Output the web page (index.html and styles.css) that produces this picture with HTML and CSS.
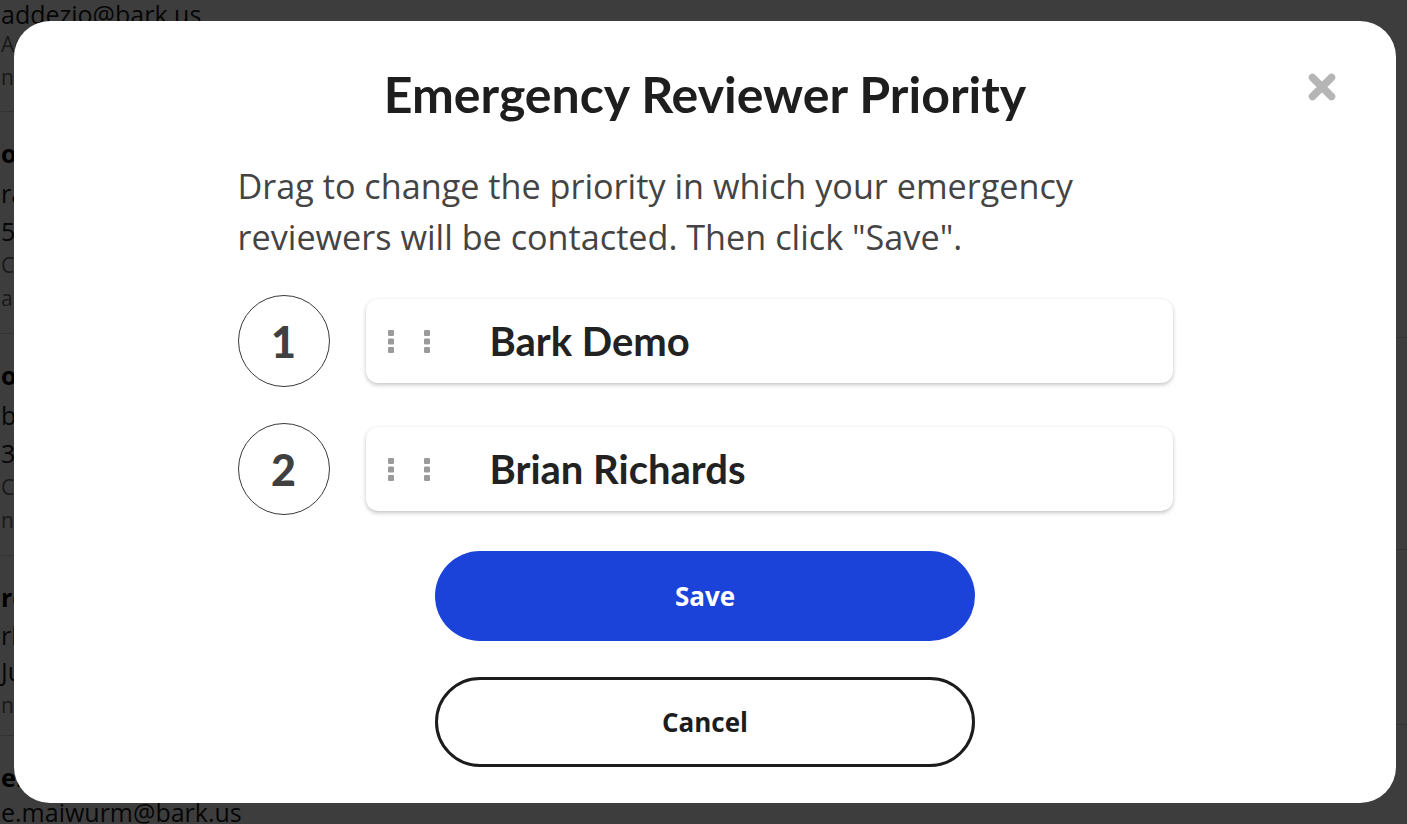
FILE: index.html
```html
<!DOCTYPE html>
<html lang="en">
<head>
<meta charset="utf-8">
<title>Emergency Reviewer Priority</title>
<link rel="stylesheet" href="styles.css">
</head>
<body>
<div class="page">
  <div class="list">
    <div class="person person-a">
      <div class="l-email">addezio@bark.us</div>
      <div class="l-meta">Added Jan 12</div>
      <div class="l-meta">no alerts</div>
    </div>
    <div class="person">
      <div class="l-name">olivia Park</div>
      <div class="l-text">rachel@bark.us</div>
      <div class="l-text l-short">555-201-4432</div>
      <div class="l-meta">Contact</div>
      <div class="l-meta">arrived Mar 2</div>
    </div>
    <div class="person">
      <div class="l-name">owen Hale</div>
      <div class="l-text">bhale@bark.us</div>
      <div class="l-text l-short">312-555-0187</div>
      <div class="l-meta">Contact</div>
      <div class="l-meta">no alerts</div>
    </div>
    <div class="person person-d">
      <div class="l-name">rosa Lin</div>
      <div class="l-text l-short">rlin@bark.us</div>
      <div class="l-text l-short">June 4</div>
      <div class="l-meta">no alerts</div>
    </div>
    <div class="person person-e">
      <div class="l-name">emma Maiwurm</div>
      <div class="l-email">e.maiwurm@bark.us</div>
    </div>
  </div>
  <div class="side">
    <div class="side-block side-1"></div>
    <div class="side-block side-2"></div>
    <div class="side-block side-3"></div>
  </div>
</div>

<div class="overlay">
  <div class="modal" role="dialog" aria-labelledby="modal-title">
    <button class="close" aria-label="Close">
      <svg width="28" height="28" viewBox="0 0 28 28" aria-hidden="true">
        <path d="M4.5 4.5 L23.5 23.5 M23.5 4.5 L4.5 23.5" stroke="#b5b5b5" stroke-width="7.5" stroke-linecap="round" fill="none"/>
      </svg>
    </button>
    <h1 class="title" id="modal-title">Emergency Reviewer Priority</h1>
    <p class="desc">Drag to change the priority in which your emergency reviewers will be contacted. Then click "Save".</p>
    <ol class="reviewers">
      <li class="reviewer">
        <span class="rank">1</span>
        <div class="card">
          <span class="handle"><svg width="6" height="23" viewBox="0 0 6 23"><rect x="0" y="0" width="6" height="6" rx="1.2"/><rect x="0" y="8.5" width="6" height="6" rx="1.2"/><rect x="0" y="17" width="6" height="6" rx="1.2"/></svg></span>
          <span class="handle"><svg width="6" height="23" viewBox="0 0 6 23"><rect x="0" y="0" width="6" height="6" rx="1.2"/><rect x="0" y="8.5" width="6" height="6" rx="1.2"/><rect x="0" y="17" width="6" height="6" rx="1.2"/></svg></span>
          <span class="name">Bark Demo</span>
        </div>
      </li>
      <li class="reviewer">
        <span class="rank">2</span>
        <div class="card">
          <span class="handle"><svg width="6" height="23" viewBox="0 0 6 23"><rect x="0" y="0" width="6" height="6" rx="1.2"/><rect x="0" y="8.5" width="6" height="6" rx="1.2"/><rect x="0" y="17" width="6" height="6" rx="1.2"/></svg></span>
          <span class="handle"><svg width="6" height="23" viewBox="0 0 6 23"><rect x="0" y="0" width="6" height="6" rx="1.2"/><rect x="0" y="8.5" width="6" height="6" rx="1.2"/><rect x="0" y="17" width="6" height="6" rx="1.2"/></svg></span>
          <span class="name">Brian Richards</span>
        </div>
      </li>
    </ol>
    <div class="actions">
      <button class="btn btn-primary">Save</button>
      <button class="btn btn-secondary">Cancel</button>
    </div>
  </div>
</div>
</body>
</html>
```

FILE: styles.css
```css
* { box-sizing: border-box; }

html, body {
  margin: 0;
  padding: 0;
  height: 100%;
  overflow: hidden;
}

body {
  background: #ffffff;
  font-family: "Open Sans", "Noto Sans", sans-serif;
}

/* underlying page */
.page {
  display: grid;
  grid-template-columns: 1fr 120px;
  height: 100%;
}

.list {
  display: flex;
  flex-direction: column;
  margin-left: 1px;
  white-space: nowrap;
}

.person {
  padding: 21px 0 18px;
  border-bottom: 1px solid #cfcfcf;
}

.person-a { padding: 0 0 17px; }
.person-d { padding-bottom: 13px; }
.person-e { border-bottom: none; }

.l-name {
  font-size: 25px;
  line-height: 40px;
  font-weight: 700;
  color: #000;
}

.l-email {
  font-size: 25px;
  line-height: 28px;
  color: #1a1a1a;
}

.person-e .l-email { line-height: 30px; }

.l-text {
  font-size: 25px;
  line-height: 40px;
  color: #1a1a1a;
}

.l-short { line-height: 36px; }

.l-meta {
  font-size: 21px;
  line-height: 33px;
  color: #6a6a6a;
}

.person-a .l-meta:first-of-type { margin-top: 7px; }

.side {
  display: flex;
  flex-direction: column;
}

.side-block { border-bottom: 1px solid #cfcfcf; }
.side-1 { height: 338px; }
.side-2 { height: 212px; }
.side-3 { height: 175px; }

/* overlay + modal */
.overlay {
  position: fixed;
  inset: 0;
  background: rgba(0, 0, 0, 0.76);
  display: flex;
  padding: 21px 11px 21px 14px;
}

.modal {
  position: relative;
  flex: 1;
  background: #ffffff;
  border-radius: 36px;
  padding: 44px 0 36px;
  display: flex;
  flex-direction: column;
  align-items: center;
}

.close {
  position: absolute;
  top: 52px;
  right: 60px;
  width: 28px;
  height: 28px;
  padding: 0;
  border: none;
  background: none;
  display: flex;
}

.title {
  margin: 0;
  font-family: "Lato", sans-serif;
  font-weight: 700;
  font-size: 50px;
  line-height: 58px;
  color: #1e1e1e;
  text-align: center;
}

.desc {
  width: 935px;
  margin: 37px 0 0;
  font-family: "Open Sans", "Noto Sans", sans-serif;
  font-size: 34.2px;
  line-height: 51px;
  color: #444444;
}

.reviewers {
  list-style: none;
  width: 935px;
  margin: 33px 0 0;
  padding: 0;
  display: flex;
  flex-direction: column;
  gap: 36px;
}

.reviewer {
  display: flex;
  align-items: center;
  gap: 36px;
}

.rank {
  flex: none;
  width: 92px;
  height: 92px;
  border: 1px solid #3a3a3a;
  border-radius: 50%;
  display: flex;
  align-items: center;
  justify-content: center;
  font-family: "Lato", sans-serif;
  font-weight: 900;
  font-size: 43px;
  color: #404040;
}

.card {
  flex: 1;
  height: 84px;
  background: #ffffff;
  border-radius: 12px;
  box-shadow: 0 2px 4px rgba(0, 0, 0, 0.22), 0 0 2px rgba(0, 0, 0, 0.06);
  display: flex;
  align-items: center;
  padding-left: 22px;
  gap: 30px;
}

.handle {
  display: flex;
  fill: #9a9a9a;
}

.name {
  margin-left: 30px;
  font-family: "Lato", sans-serif;
  font-weight: 700;
  font-size: 40px;
  color: #222222;
}

.actions {
  margin-top: 36px;
  display: flex;
  flex-direction: column;
  gap: 36px;
}

.btn {
  width: 540px;
  height: 90px;
  border-radius: 45px;
  font-family: "Open Sans", "Noto Sans", sans-serif;
  font-weight: 700;
  font-size: 26px;
  cursor: pointer;
}

.btn-primary {
  background: #1b43d9;
  border: none;
  color: #ffffff;
}

.btn-secondary {
  background: #ffffff;
  border: 3px solid #1c1c1c;
  color: #1c1c1c;
}
```
